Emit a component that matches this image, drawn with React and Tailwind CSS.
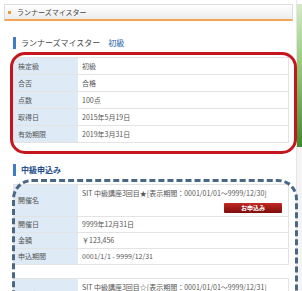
const font = { fontFamily: '"Noto Sans CJK JP", "Noto Sans", sans-serif' }

const masterRows = [
  ['検定級', '初級'],
  ['合否', '合格'],
  ['点数', '100点'],
  ['取得日', '2015年5月19日'],
  ['有効期限', '2019年3月31日'],
]

const courses = [
  {
    name: 'SIT 中級講座3回目★[表示期間：0001/01/01～9999/12/30]',
    date: '9999年12月31日',
    price: '￥123,456',
    period: '0001/1/1 - 9999/12/31',
  },
  {
    name: 'SIT 中級講座3回目☆[表示期間：0001/01/01～9999/12/31]',
    date: '9999年12月31日',
    price: '￥123,456',
    period: '0001/1/1 - 9999/12/31',
  },
]

function Heading({ children }) {
  return (
    <div className="flex items-center h-[12px]">
      <div className="w-[3px] h-[12px] bg-[#3f7cc4]" />
      <div className="ml-[5px] text-[8px] leading-[12px] text-[#444]">{children}</div>
    </div>
  )
}

function Row({ label, children, tall }) {
  return (
    <div className={`grid grid-cols-[64px_1fr] border-b border-[#e3e3e3] ${tall ? 'h-[32px]' : 'h-[16px]'}`}>
      <div className="bg-[#deeaf6] flex items-center pl-[4px] text-[7px] text-[#555]">{label}</div>
      <div className="bg-white pl-[4px] pr-[6px] text-[7px] text-[#555] flex flex-col justify-center">{children}</div>
    </div>
  )
}

function CourseTable({ c }) {
  return (
    <div className="border-t border-x border-[#e3e3e3]">
      <Row label="開催名" tall>
        <div className="leading-[10px]">{c.name}</div>
        <div className="flex justify-end mt-[5px]">
          <div className="w-[58px] h-[10px] rounded-[1px] bg-gradient-to-b from-[#c42a24] to-[#7d0c0c] text-white text-[6px] font-bold leading-[10px] text-center">
            お申込み
          </div>
        </div>
      </Row>
      <Row label="開催日">{c.date}</Row>
      <Row label="金額">{c.price}</Row>
      <Row label="申込期間">{c.period}</Row>
    </div>
  )
}

export default function App() {
  return (
    <div className="w-[302px] h-[291px] overflow-hidden bg-white flex" style={font}>
      <div className="w-[296px] pl-[4px] pt-[4px]">
        <div className="w-[289px] h-[17px] flex items-center border border-[#dedede] border-b-2 border-b-[#f3a457] bg-gradient-to-b from-white to-[#ececec]">
          <div className="ml-[3px] w-[3px] h-[3px] bg-[#ef9a3f]" />
          <div className="ml-[6px] text-[7px] text-[#444]">ランナーズマイスター</div>
        </div>

        <div className="ml-[9px] w-[276px]">
          <div className="mt-[16px]">
            <Heading>
              ランナーズマイスター<span className="ml-[8px] text-[#2b63a8]">初級</span>
            </Heading>
          </div>

          <div className="relative mt-[8px]">
            <div className="border-t border-x border-[#e3e3e3]">
              {masterRows.map(([k, v]) => (
                <div key={k} className="grid grid-cols-[64px_1fr] h-[17px] border-b border-[#e3e3e3]">
                  <div className="bg-[#deeaf6] flex items-center pl-[4px] text-[7px] text-[#555]">{k}</div>
                  <div className="flex items-center pl-[4px] text-[7px] text-[#555]">{v}</div>
                </div>
              ))}
            </div>
            <div className="absolute -left-[3px] -top-[5px] -right-[8px] -bottom-[11px] border-[3px] border-[#c5161d] rounded-[15px] pointer-events-none" />
          </div>

          <div className="mt-[21px]">
            <div className="flex items-center h-[12px]">
              <div className="w-[3px] h-[12px] bg-[#3f7cc4]" />
              <div className="ml-[5px] text-[8px] font-bold text-[#1f4e8c]">中級申込み</div>
            </div>
          </div>

          <div className="relative mt-[8px]">
            <CourseTable c={courses[0]} />
            <div className="h-[13px]" />
            <CourseTable c={courses[1]} />
            <div className="absolute -left-[1px] -top-[5px] -right-[9px] -bottom-[20px] border-[3px] border-dashed border-[#4a6886] rounded-[20px] pointer-events-none" />
          </div>
        </div>
      </div>

      <div className="w-[6px] pt-[4px] border-l border-[#e6e6e6]">
        <div className="h-[143px] bg-gradient-to-b from-[#d5ebc6] via-[#8cc36e] to-[#3f8a2c]" />
        <div className="h-[144px] bg-[#f4f4f4]" />
      </div>
    </div>
  )
}
